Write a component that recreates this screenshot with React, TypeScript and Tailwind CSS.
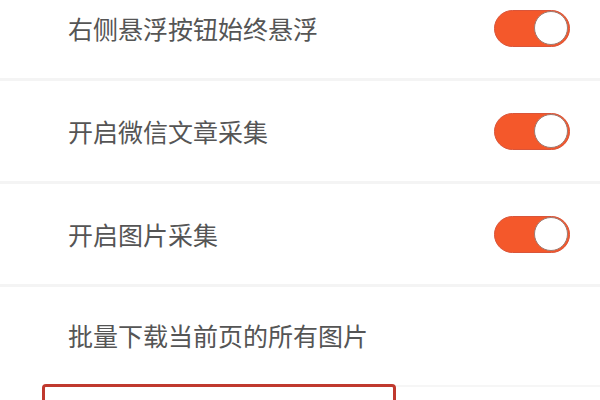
import React from "react";

const rows = [
  { label: "右侧悬浮按钮始终悬浮", toggle: true },
  { label: "开启微信文章采集", toggle: true },
  { label: "开启图片采集", toggle: true },
];

const Toggle = () => (
  <div className="w-[76px] h-[37px] rounded-full bg-[#f4582b] border border-[#d9553a] flex items-center justify-end pr-[1px]">
    <div className="w-[34px] h-[34px] rounded-full bg-white border border-[#9c7b72]" />
  </div>
);

export default function App() {
  return (
    <div
      className="w-[600px] h-[400px] overflow-hidden bg-white"
      style={{ fontFamily: '"Noto Sans CJK SC", "Noto Sans", sans-serif' }}
    >
      <div className="-mt-[22px]">
        {rows.map((r) => (
          <div
            key={r.label}
            className="h-[103px] border-b-[3px] border-[#f4f4f4] flex items-center justify-between pl-[68px] pr-[30px]"
          >
            <span className="text-[25px] leading-none text-[#555555]">{r.label}</span>
            {r.toggle && <Toggle />}
          </div>
        ))}
        <div className="h-[97px] flex items-center pl-[68px]">
          <span className="text-[25px] leading-none text-[#555555]">批量下载当前页的所有图片</span>
        </div>
        <div className="flex items-start">
          <div className="ml-[42px] w-[354px] h-[30px] border-[3px] border-b-0 border-[#c0392e] rounded-t-[4px]" />
          <div className="flex-1 mt-[1px] border-t-[2px] border-[#f6f6f6]" />
        </div>
      </div>
    </div>
  );
}
